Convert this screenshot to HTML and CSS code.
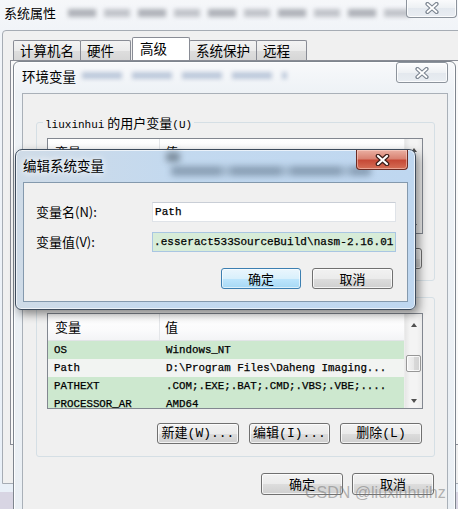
FILE: index.html
```html
<!DOCTYPE html>
<html lang="zh-CN">
<head>
<meta charset="utf-8">
<title>编辑系统变量</title>
<link rel="stylesheet" href="styles.css">
</head>
<body>
<div class="win sys">
  <div class="titlebar sys-title">
    <span class="title">系统属性</span>
    <span class="blurtext sys-blur"></span>
  </div>
  <div class="closebtn sys-close">
    <svg width="16" height="12" viewBox="0 0 16 12"><path d="M3.5 2 L12.5 10 M12.5 2 L3.5 10" stroke="#7d8692" stroke-width="4.2" stroke-linecap="round"/><path d="M3.5 2 L12.5 10 M12.5 2 L3.5 10" stroke="#ffffff" stroke-width="1.8" stroke-linecap="round"/></svg>
  </div>
  <div class="sys-client">
    <div class="tabs">
      <div class="tab">计算机名</div>
      <div class="tab">硬件</div>
      <div class="tab sel">高级</div>
      <div class="tab">系统保护</div>
      <div class="tab">远程</div>
    </div>
    <div class="tabpanel"></div>
  </div>
</div>

<div class="win env">
  <div class="titlebar env-title">
    <span class="title">环境变量</span>
    <span class="blurtext env-blur"></span>
  </div>
  <div class="closebtn env-close">
    <svg width="16" height="12" viewBox="0 0 16 12"><path d="M3.5 2 L12.5 10 M12.5 2 L3.5 10" stroke="#7d8692" stroke-width="4.2" stroke-linecap="round"/><path d="M3.5 2 L12.5 10 M12.5 2 L3.5 10" stroke="#ffffff" stroke-width="1.8" stroke-linecap="round"/></svg>
  </div>
  <div class="env-client">
    <div class="group user-group">
      <div class="legend"><span class="mono small">liuxinhui</span> 的用户变量<span class="mono small">(U)</span></div>
      <div class="list">
        <div class="list-main">
          <div class="lv-head"><div class="c1">变量</div><div class="c2">值</div></div>
          <div class="lv-row green"></div>
          <div class="lv-row green"></div>
          <div class="lv-row green"></div>
          <div class="lv-row green"></div>
        </div>
        <div class="vscroll">
          <div class="arrow"><span class="tri up"></span></div>
          <div class="track"></div>
          <div class="arrow"><span class="tri down"></span></div>
        </div>
      </div>
      <div class="btnrow grp-btns">
        <div class="btn w82"></div>
        <div class="btn w81"></div>
        <div class="btn w82"></div>
      </div>
    </div>

    <div class="group sys-group">
      <div class="legend blank"></div>
      <div class="list">
        <div class="list-main">
          <div class="lv-head"><div class="c1">变量</div><div class="c2">值</div></div>
          <div class="lv-row green"><div class="c1">OS</div><div class="c2">Windows_NT</div></div>
          <div class="lv-row selrow"><div class="c1">Path</div><div class="c2">D:\Program Files\Daheng Imaging...</div></div>
          <div class="lv-row green"><div class="c1">PATHEXT</div><div class="c2">.COM;.EXE;.BAT;.CMD;.VBS;.VBE;....</div></div>
          <div class="lv-row green"><div class="c1">PROCESSOR_AR</div><div class="c2">AMD64</div></div>
        </div>
        <div class="vscroll">
          <div class="arrow"><span class="tri up"></span></div>
          <div class="track"><div class="thumb"></div></div>
          <div class="arrow"><span class="tri down"></span></div>
        </div>
      </div>
      <div class="btnrow grp-btns">
        <div class="btn mono w82">新建(W)...</div>
        <div class="btn mono w81">编辑(I)...</div>
        <div class="btn mono w82">删除(L)</div>
      </div>
    </div>

    <div class="btnrow env-btns">
      <div class="btn w82">确定</div>
      <div class="btn w82">取消</div>
    </div>
  </div>
</div>

<div class="win edit">
  <div class="titlebar edit-title">
    <span class="title">编辑系统变量</span>
    <span class="glass-blur gb1"></span>
    <span class="glass-blur gb2"></span>
  </div>
  <div class="closebtn edit-close">
    <svg width="17" height="12" viewBox="0 0 17 12"><path d="M4 2 L13 10 M13 2 L4 10" stroke="#3c1e1a" stroke-width="4.6" stroke-linecap="round"/><path d="M4 2 L13 10 M13 2 L4 10" stroke="#ffffff" stroke-width="2.2" stroke-linecap="round"/></svg>
  </div>
  <div class="edit-client">
    <div class="form">
      <div class="label">变量名(N):</div>
      <div class="field mono">Path</div>
      <div class="label">变量值(V):</div>
      <div class="field mono active">.esseract533SourceBuild\nasm-2.16.01</div>
    </div>
    <div class="btnrow edit-btns">
      <div class="btn default w80">确定</div>
      <div class="btn w81">取消</div>
    </div>
  </div>
</div>

<div class="watermark">CSDN @liuxinhuihz</div>
</body>
</html>
```

FILE: styles.css
```css
* { box-sizing: border-box; margin: 0; padding: 0; }
html, body { width: 458px; height: 509px; overflow: hidden; }
body {
  position: relative;
  background: #d8d5e3;
  font-family: "Noto Sans CJK SC", "Noto Sans", sans-serif;
  font-size: 13px;
  color: #000;
}
.mono { font-family: "Liberation Mono", "Noto Sans CJK SC", monospace; }
.small { font-size: 11px; }

.win { position: absolute; }
.titlebar { display: flex; align-items: center; }
.title { line-height: 16px; white-space: nowrap; }

.blurtext {
  display: inline-block;
  height: 8px;
  filter: blur(2.2px);
}

/* close buttons */
.closebtn {
  position: absolute;
  top: 0;
  display: flex;
  align-items: center;
  justify-content: center;
  border: 1px solid #8c939c;
  border-radius: 3px;
  background: linear-gradient(#fdfdfe, #eef1f4 50%, #e3e8ee 51%, #e9edf2);
  box-shadow: inset 0 0 0 1px rgba(255,255,255,.8);
}

/* ---------- outer window: 系统属性 ---------- */
.sys {
  left: -5px;
  top: -10px;
  width: 470px;
  height: 502px;
  background: linear-gradient(#f7f8fa, #f1f4f8 40px, #e9f0f8);
}
.sys-title { height: 40px; padding: 6px 0 0 9px; }
.sys-blur {
  width: 350px;
  margin-left: 12px;
  background: repeating-linear-gradient(90deg, rgba(120,124,134,.55) 0 28px, transparent 28px 36px, rgba(120,124,134,.4) 36px 62px, transparent 62px 70px);
}
.sys-close { top: 8px; right: 8px; width: 51px; height: 20px; border-radius: 0 0 4px 4px; border-top: none; }
.sys-client {
  margin-left: 7px;
  width: 463px;
  height: 454px;
  background: #f0f0f0;
  border: 1px solid #a6acb4;
  border-radius: 4px 4px 0 0;
}
.tabs {
  display: flex;
  align-items: flex-end;
  height: 29px;
  padding: 6px 0 0 10px;
}
.tab {
  min-width: 51px;
  height: 20px;
  padding: 0 6px;
  line-height: 19px;
  font-size: 13.5px;
  white-space: nowrap;
  border: 1px solid #898c95;
  border-bottom: none;
  border-radius: 2px 2px 0 0;
  background: linear-gradient(#f3f3f3, #ebebeb 50%, #dedede 51%, #d6d6d6);
}
.tab + .tab { margin-left: -1px; }
.tab.sel {
  min-width: 58px;
  height: 23px;
  padding: 0 7px;
  line-height: 21px;
  margin-left: 1px;
  background: #fff;
  position: relative;
}
.tabpanel {
  margin-left: 7px;
  height: 385px;
  border: 1px solid #898c95;
  background: #f9f9f9;
}

/* ---------- 环境变量 ---------- */
.env {
  left: 13px;
  top: 61px;
  width: 443px;
  height: 460px;
  border: 1px solid #7e858e;
  border-radius: 6px 6px 0 0;
  background: linear-gradient(#f8f9fb, #eef2f6 30px, #eaeff4);
  box-shadow: inset 0 0 0 1px rgba(255,255,255,.85);
}
.env-title { height: 31px; padding: 0 0 4px 8px; font-size: 13.5px; }
.env-blur {
  width: 205px;
  margin-left: 6px;
  height: 7px;
  background: repeating-linear-gradient(90deg, rgba(90,120,165,.35) 0 40px, transparent 40px 50px);
}
.env-close { right: 7px; width: 52px; height: 21px; }
.env-client {
  margin: 0 7px 0 8px;
  height: 430px;
  background: #f0f0f0;
  border: 1px solid #a9b0b8;
}

.group {
  margin: 0 12px 0 13px;
  border: 1px solid #d5dfe5;
  border-radius: 3px;
  padding: 0 11px 0 10px;
}
.user-group { margin-top: 28px; height: 159px; }
.sys-group { margin-top: 16px; padding-bottom: 12px; }
.legend {
  width: max-content;
  height: 16px;
  margin: -8px 0 0 -4px;
  padding: 0 2px;
  line-height: 16px;
  font-size: 13px;
  white-space: nowrap;
  background: #f0f0f0;
}
.legend.blank { width: 78px; }

.list {
  display: flex;
  margin-top: 7px;
  height: 96px;
  border: 1px solid #828790;
  background: #fff;
  overflow: hidden;
}
.list-main { flex: 1; overflow: hidden; }
.lv-head {
  display: flex;
  height: 27px;
  line-height: 25px;
  font-size: 13px;
  background: linear-gradient(#ffffff, #fbfbfc 60%, #f3f4f6);
  border-bottom: 1px solid #e2e4e7;
}
.lv-head .c1 { width: 112px; padding-left: 7px; border-right: 1px solid #e4e6e9; }
.lv-head .c2 { padding-left: 5px; }
.lv-row {
  display: flex;
  height: 18px;
  line-height: 18px;
  font-family: "Liberation Mono", "Noto Sans CJK SC", monospace;
  font-size: 10.8px;
  white-space: nowrap;
  -webkit-text-stroke: 0.25px #000;
}
.lv-row .c1 { width: 112px; padding-left: 6px; }
.lv-row .c2 { padding-left: 6px; }
.green { background: #cde8cf; }
.selrow { background: #f2f4f2; }

.vscroll {
  width: 18px;
  display: flex;
  flex-direction: column;
  background: linear-gradient(90deg, #e6e6e6, #f4f4f4 30%, #f4f4f4 70%, #ebebeb);
  border-left: 1px solid #ececec;
}
.arrow { height: 17px; display: flex; align-items: center; justify-content: center; }
.tri { width: 0; height: 0; border-left: 3.5px solid transparent; border-right: 3.5px solid transparent; }
.tri.up { border-bottom: 4px solid #505050; margin-top: 5px; }
.tri.down { border-top: 4px solid #505050; margin-top: 2px; }
.track { flex: 1; padding: 24px 1px 0 1px; }
.thumb {
  height: 17px;
  border: 1px solid #979797;
  border-radius: 2px;
  background: linear-gradient(90deg, #f3f3f3, #e8e8e8 50%, #d9d9d9 51%, #d2d2d2);
  box-shadow: inset 0 0 0 1px rgba(255,255,255,.8);
}

.btnrow { display: flex; justify-content: flex-end; }
.btn {
  height: 21px;
  display: flex;
  align-items: center;
  justify-content: center;
  font-size: 13px;
  line-height: 16px;
  white-space: nowrap;
  border: 1px solid #707070;
  border-radius: 3px;
  background: linear-gradient(#f2f2f2, #ebebeb 50%, #dddddd 51%, #cfcfcf);
  box-shadow: inset 0 0 0 1px rgba(255,255,255,.75);
}
.w80 { width: 80px; }
.w81 { width: 81px; }
.w82 { width: 82px; }
.grp-btns { margin-top: 14px; gap: 10px; margin-right: 1px; }
.env-btns { margin-top: 16px; padding-right: 13px; gap: 9px; }
.env-btns .btn { height: 22px; }

/* ---------- 编辑系统变量 ---------- */
.edit {
  left: 15px;
  top: 149px;
  width: 401px;
  height: 161px;
  border: 1px solid #3e4c5d;
  border-radius: 7px 7px 6px 6px;
  background: linear-gradient(90deg, #cfdbe7, #c3d9ef 40%, #bfd7f0);
  box-shadow: 3px 4px 10px rgba(0,0,0,.45), inset 0 0 0 1px rgba(255,255,255,.65);
}
.edit-title {
  position: relative;
  height: 32px;
  padding: 0 0 3px 7px;
  font-size: 13.5px;
}
.edit-title .title { position: relative; z-index: 1; text-shadow: 0 0 6px #fff, 0 0 10px rgba(255,255,255,.9); }
.glass-blur {
  position: absolute;
  filter: blur(3px);
  border-radius: 3px;
}
.gb1 { left: 150px; top: 2px; width: 14px; height: 10px; background: rgba(40,50,60,.45); }
.gb2 { left: 155px; top: 16px; width: 200px; height: 10px; background: repeating-linear-gradient(90deg, rgba(70,90,110,.45) 0 50px, rgba(70,90,110,.25) 50px 60px); }
.edit-close {
  right: 7px;
  width: 52px;
  height: 20px;
  border: 1px solid #6b2b23;
  border-radius: 0 0 4px 4px;
  border-top: none;
  background: linear-gradient(#eab0a3, #d98373 45%, #c64a37 55%, #d56f57);
  box-shadow: inset 0 0 0 1px rgba(255,220,210,.5);
}
.edit-client {
  margin: 0 7px;
  height: 120px;
  background: #f0f0f0;
  border: 1px solid #8499ad;
  padding: 19px 11px 0 12px;
}
.form {
  display: grid;
  grid-template-columns: 116px 1fr;
  grid-auto-rows: 20px;
  row-gap: 10px;
  align-items: center;
}
.label { font-size: 13px; line-height: 16px; white-space: nowrap; }
.field {
  height: 20px;
  line-height: 18px;
  padding-left: 2px;
  font-size: 11px;
  letter-spacing: 0.05px;
  white-space: nowrap;
  overflow: hidden;
  border: 1px solid #dfe3e8;
  border-top-color: #c9ced6;
  background: #fff;
  -webkit-text-stroke: 0.25px #000;
}
.field.active {
  background: #d7ecd8;
  border-color: #a9c6e2;
  padding-left: 1px;
}
.edit-btns { margin-top: 16px; gap: 11px; padding-right: 3px; }
.btn.default {
  border-color: #3c7fb1;
  background: linear-gradient(#eaf6fd, #d9f0fc 50%, #bee6fd 51%, #a7d9f5);
  box-shadow: inset 0 0 0 1px rgba(255,255,255,.6);
}

.watermark {
  position: absolute;
  left: 305px;
  top: 485px;
  font-family: "Liberation Sans", sans-serif;
  font-size: 16px;
  line-height: 16px;
  color: rgba(120,120,120,.55);
  white-space: nowrap;
}
```
